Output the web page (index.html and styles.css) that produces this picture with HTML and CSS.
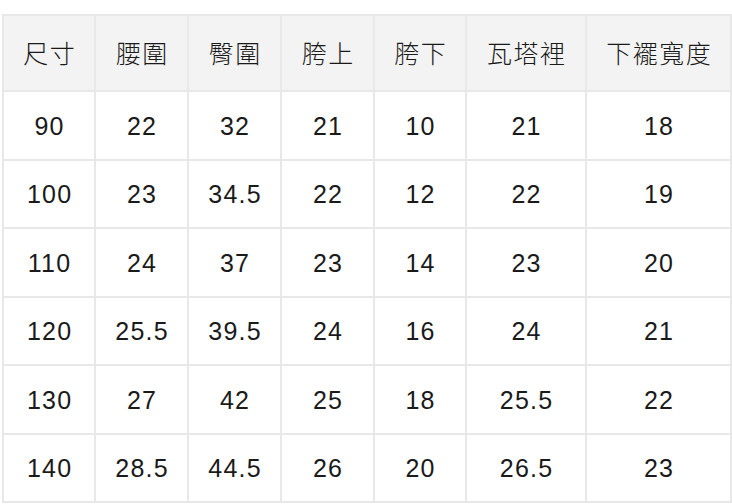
FILE: index.html
```html
<!DOCTYPE html>
<html lang="zh-Hant">
<head>
<meta charset="utf-8">
<link rel="stylesheet" href="styles.css">
</head>
<body>
<div class="wrap">
<table class="size-table">
  <colgroup>
    <col class="c1"><col class="c2"><col class="c3"><col class="c4"><col class="c5"><col class="c6"><col class="c7">
  </colgroup>
  <thead>
    <tr><th>尺寸</th><th>腰圍</th><th>臀圍</th><th>胯上</th><th>胯下</th><th>瓦塔裡</th><th>下襬寬度</th></tr>
  </thead>
  <tbody>
    <tr><td>90</td><td>22</td><td>32</td><td>21</td><td>10</td><td>21</td><td>18</td></tr>
    <tr><td>100</td><td>23</td><td>34.5</td><td>22</td><td>12</td><td>22</td><td>19</td></tr>
    <tr><td>110</td><td>24</td><td>37</td><td>23</td><td>14</td><td>23</td><td>20</td></tr>
    <tr><td>120</td><td>25.5</td><td>39.5</td><td>24</td><td>16</td><td>24</td><td>21</td></tr>
    <tr><td>130</td><td>27</td><td>42</td><td>25</td><td>18</td><td>25.5</td><td>22</td></tr>
    <tr><td>140</td><td>28.5</td><td>44.5</td><td>26</td><td>20</td><td>26.5</td><td>23</td></tr>
  </tbody>
</table>
</div>
</body>
</html>
```
FILE: styles.css
```css
html, body {
  margin: 0;
  padding: 0;
  background: #ffffff;
}
.wrap {
  padding: 14px 0 0 2px;
}
.size-table {
  table-layout: fixed;
  width: 730px;
  border-collapse: separate;
  border-spacing: 2px;
  background: #e8e8e8;
  font-family: "Liberation Sans", "Noto Sans CJK TC", sans-serif;
  font-size: 25px;
  color: #1a1a1a;
}
.c1 { width: 90px; }
.c2 { width: 91px; }
.c3 { width: 91px; }
.c4 { width: 91px; }
.c5 { width: 90px; }
.c6 { width: 118px; }
.c7 { width: 143px; }
.size-table th,
.size-table td {
  padding: 2px 0 0 0;
  text-align: center;
  vertical-align: middle;
  background: #ffffff;
  font-weight: normal;
  line-height: 1;
  white-space: nowrap;
  letter-spacing: 1.2px;
  text-indent: 1.2px;
}
.size-table th {
  background: #f3f3f3;
  height: 72px;
  font-weight: 300;
  letter-spacing: 1.5px;
  text-indent: 1.5px;
}
.size-table td {
  height: 64.5px;
}
```
